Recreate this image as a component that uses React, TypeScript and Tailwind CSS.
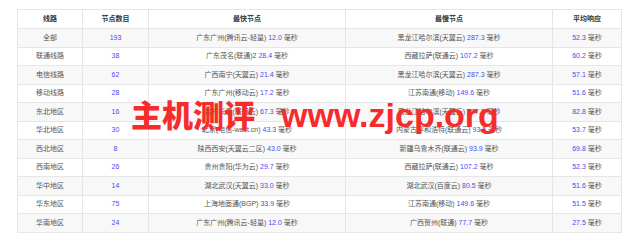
import React from 'react';

type Row = {
  line: string;
  count: number;
  fastName: string;
  fastMs: string;
  slowName: string;
  slowMs: string;
  avg: string;
};

const rows: Row[] = [
  { line: '全部', count: 193, fastName: '广东广州(腾讯云-轻量)', fastMs: '12.0', slowName: '黑龙江哈尔滨(天翼云)', slowMs: '287.3', avg: '52.3' },
  { line: '联通线路', count: 38, fastName: '广东茂名(联通)2', fastMs: '28.4', slowName: '西藏拉萨(联通云)', slowMs: '107.2', avg: '60.2' },
  { line: '电信线路', count: 62, fastName: '广西南宁(天翼云)', fastMs: '21.4', slowName: '黑龙江哈尔滨(天翼云)', slowMs: '287.3', avg: '57.1' },
  { line: '移动线路', count: 28, fastName: '广东广州(移动云)', fastMs: '17.2', slowName: '江苏南通(移动)', slowMs: '149.6', avg: '51.6' },
  { line: '东北地区', count: 16, fastName: '吉林长春(联通云)', fastMs: '67.3', slowName: '黑龙江哈尔滨(天翼云)', slowMs: '287.3', avg: '82.8' },
  { line: '华北地区', count: 30, fastName: '北京(电信-west.cn)', fastMs: '43.3', slowName: '内蒙古呼和浩特(联通云)', slowMs: '93.5', avg: '53.7' },
  { line: '西北地区', count: 8, fastName: '陕西西安(天翼云二区)', fastMs: '43.0', slowName: '新疆乌鲁木齐(联通云)', slowMs: '93.9', avg: '69.8' },
  { line: '西南地区', count: 26, fastName: '贵州贵阳(华为云)', fastMs: '29.7', slowName: '西藏拉萨(联通云)', slowMs: '107.2', avg: '52.3' },
  { line: '华中地区', count: 14, fastName: '湖北武汉(天翼云)', fastMs: '33.0', slowName: '湖北武汉(百度云)', slowMs: '80.5', avg: '51.6' },
  { line: '华东地区', count: 75, fastName: '上海地面通(BGP)', fastMs: '33.9', slowName: '江苏南通(移动)', slowMs: '149.6', avg: '51.5' },
  { line: '华南地区', count: 24, fastName: '广东广州(腾讯云-轻量)', fastMs: '12.0', slowName: '广西贺州(联通)', slowMs: '77.7', avg: '27.5' },
];

const Ms = ({ value }: { value: string }) => (
  <>
    <span className="text-[#4a4af4]">{value}</span> 毫秒
  </>
);

export default function App() {
  return (
    <div className="relative w-[640px] h-[241px] bg-white overflow-hidden font-['Liberation_Sans','Noto_Sans_CJK_SC',sans-serif]">
      <div className="pt-[9px] pl-[17px]">
        <table className="table-fixed border-collapse w-[604px] text-[7px] text-[#555] text-center">
          <colgroup>
            <col className="w-[65px]" />
            <col className="w-[66px]" />
            <col className="w-[197px]" />
            <col className="w-[207px]" />
            <col className="w-[69px]" />
          </colgroup>
          <thead>
            <tr className="h-[19px] bg-white font-bold text-[#333]">
              <th className="border border-[#e6e6e6] p-0">线路</th>
              <th className="border border-[#e6e6e6] p-0">节点数目</th>
              <th className="border border-[#e6e6e6] p-0">最快节点</th>
              <th className="border border-[#e6e6e6] p-0">最慢节点</th>
              <th className="border border-[#e6e6e6] p-0">平均响应</th>
            </tr>
          </thead>
          <tbody>
            {rows.map((r, i) => (
              <tr key={r.line} className={i % 2 === 0 ? 'h-[18.55px] bg-[#f8f8f8]' : 'h-[18.55px] bg-white'}>
                <td className="border border-[#e6e6e6] p-0">{r.line}</td>
                <td className="border border-[#e6e6e6] p-0 text-[#4a4af4]">{r.count}</td>
                <td className="border border-[#e6e6e6] p-0 whitespace-nowrap">
                  {r.fastName} <Ms value={r.fastMs} />
                </td>
                <td className="border border-[#e6e6e6] p-0 whitespace-nowrap">
                  {r.slowName} <Ms value={r.slowMs} />
                </td>
                <td className="border border-[#e6e6e6] p-0">
                  <Ms value={r.avg} />
                </td>
              </tr>
            ))}
          </tbody>
        </table>
      </div>

      {/* watermark */}
      <div className="absolute left-[131px] top-[98px] flex items-baseline leading-none text-[#f62b2b] font-bold pointer-events-none">
        <span className="text-[31px] font-['Noto_Sans_CJK_SC',sans-serif] font-black">主机测评</span>
        <span className="ml-[26px] text-[34px] font-['Liberation_Sans',sans-serif]">www.zjcp.org</span>
      </div>
    </div>
  );
}
